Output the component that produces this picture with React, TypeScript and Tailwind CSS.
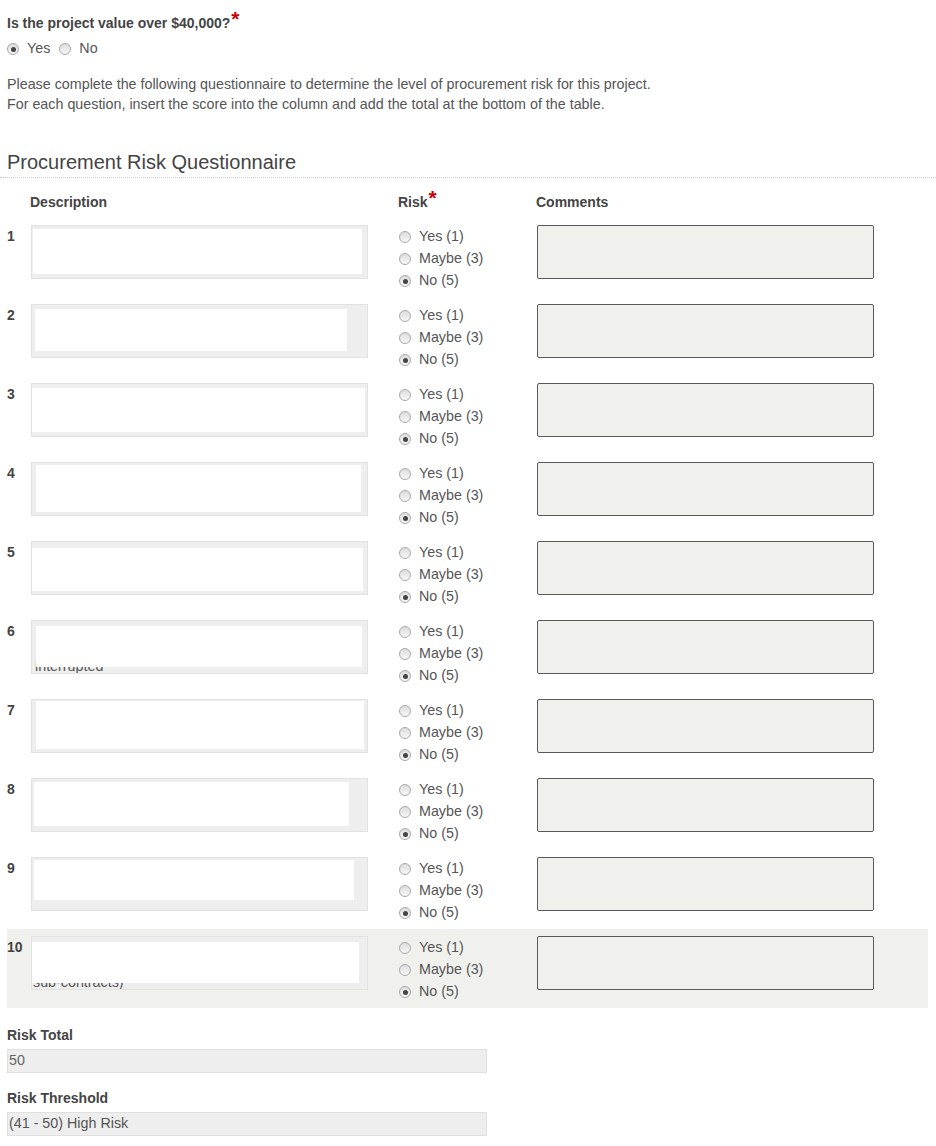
import type { ReactNode } from "react";

type Redaction = { left: number; top: number; width: number; height: number };

type Question = {
  n: number;
  cover: Redaction;
  peek?: { text: string; left: number };
};

// white boxes sit over the description text, offsets are relative to the grey box
const QUESTIONS: Question[] = [
  { n: 1, cover: { left: 1, top: 3, width: 329, height: 45 } },
  { n: 2, cover: { left: 3, top: 4, width: 312, height: 42 } },
  { n: 3, cover: { left: 0, top: 4, width: 333, height: 44 } },
  { n: 4, cover: { left: 4, top: 2, width: 325, height: 47 } },
  { n: 5, cover: { left: 0, top: 6, width: 331, height: 43 } },
  { n: 6, cover: { left: 4, top: 5, width: 326, height: 41 }, peek: { text: "interrupted", left: 3 } },
  { n: 7, cover: { left: 4, top: 1, width: 328, height: 48 } },
  { n: 8, cover: { left: 2, top: 3, width: 315, height: 44 } },
  { n: 9, cover: { left: 2, top: 2, width: 320, height: 40 } },
  { n: 10, cover: { left: -1, top: 5, width: 328, height: 41 }, peek: { text: "sub-contracts)", left: 1 } },
];

const RISK_OPTIONS = ["Yes (1)", "Maybe (3)", "No (5)"];

function Radio({ checked }: { checked?: boolean }) {
  return (
    <span className="flex h-[12px] w-[12px] shrink-0 items-center justify-center rounded-full border border-[#a9a9a9] bg-gradient-to-b from-[#dcdcdc] to-[#f7f7f7]">
      {checked && <span className="h-[5px] w-[5px] rounded-full bg-[#444]" />}
    </span>
  );
}

function Required() {
  return <span className="relative -top-[2px] ml-[1px] text-[21px] font-bold leading-[0] text-[#c00]">*</span>;
}

function FieldLabel({ children }: { children: ReactNode }) {
  return <div className="text-[14px] font-bold leading-[20px] text-[#444]">{children}</div>;
}

function QuestionRow({ q }: { q: Question }) {
  const last = q.n === 10;
  return (
    <div className={`flex h-[79px] pt-[7px] ${last ? "bg-[#f0f1ed]" : ""}`}>
      <div className="w-[24px] text-[14px] font-bold leading-[22px] text-[#444]">{q.n}</div>
      <div className="relative h-[54px] w-[337px] overflow-hidden border border-[#e2e2e2] bg-[#eeeeee]">
        {q.peek && (
          <div
            className="pt-[35px] text-[14.3px] leading-[20px] text-[#555]"
            style={{ paddingLeft: q.peek.left }}
          >
            {q.peek.text}
          </div>
        )}
        <div
          className="absolute bg-white"
          style={{ left: q.cover.left, top: q.cover.top, width: q.cover.width, height: q.cover.height }}
        />
      </div>
      <div className="ml-[31px] flex w-[138px] flex-col pt-[1px]">
        {RISK_OPTIONS.map((opt, i) => (
          <label key={opt} className="flex h-[22px] items-center gap-[8px] text-[14.3px] text-[#555]">
            <Radio checked={i === 2} />
            <span>{opt}</span>
          </label>
        ))}
      </div>
      <div className="h-[54px] w-[337px] rounded-[2px] border border-[#5a5a5a] bg-[#f0f1ed]" />
    </div>
  );
}

export default function App() {
  return (
    <div className="min-h-[1146px] w-[936px] bg-white pb-[10px] font-['Liberation_Sans',Arial,sans-serif] text-[#555]">
      <div className="px-[7px] pt-[13px]">
        <FieldLabel>
          Is the project value over $40,000?
          <Required />
        </FieldLabel>
        <div className="mt-[6px] flex h-[20px] items-center text-[14.3px] text-[#555]">
          <Radio checked />
          <span className="ml-[8px]">Yes</span>
          <span className="ml-[9px]">
            <Radio />
          </span>
          <span className="ml-[8px]">No</span>
        </div>
        <p className="mt-[15px] text-[14.3px] leading-[20px] text-[#555]">
          Please complete the following questionnaire to determine the level of procurement risk for this project.
          <br />
          For each question, insert the score into the column and add the total at the bottom of the table.
        </p>
      </div>

      <h2 className="mt-[36px] border-b border-dotted border-[#c8c8c8] px-[7px] pb-[3px] text-[20px] leading-[24px] text-[#444]">
        Procurement Risk Questionnaire
      </h2>

      <div className="px-[7px] pt-[13px]">
        <div className="flex h-[22px] items-center text-[14px] font-bold text-[#444]">
          <div className="w-[391px] pl-[23px]">Description</div>
          <div className="w-[138px]">
            Risk
            <Required />
          </div>
          <div>Comments</div>
        </div>
        <div className="mt-[5px] w-[921px]">
          {QUESTIONS.map((q) => (
            <QuestionRow key={q.n} q={q} />
          ))}
        </div>

        <div className="mt-[17px]">
          <FieldLabel>Risk Total</FieldLabel>
          <div className="mt-[4px] flex h-[24px] w-[480px] items-center border border-[#e0e0e0] bg-[#eeeeee] px-[1px] text-[14.3px] text-[#666]">
            50
          </div>
        </div>
        <div className="mt-[15px]">
          <FieldLabel>Risk Threshold</FieldLabel>
          <div className="mt-[4px] flex h-[24px] w-[480px] items-center border border-[#e0e0e0] bg-[#eeeeee] px-[1px] text-[14.3px] text-[#555]">
            (41 - 50) High Risk
          </div>
        </div>
      </div>
    </div>
  );
}
